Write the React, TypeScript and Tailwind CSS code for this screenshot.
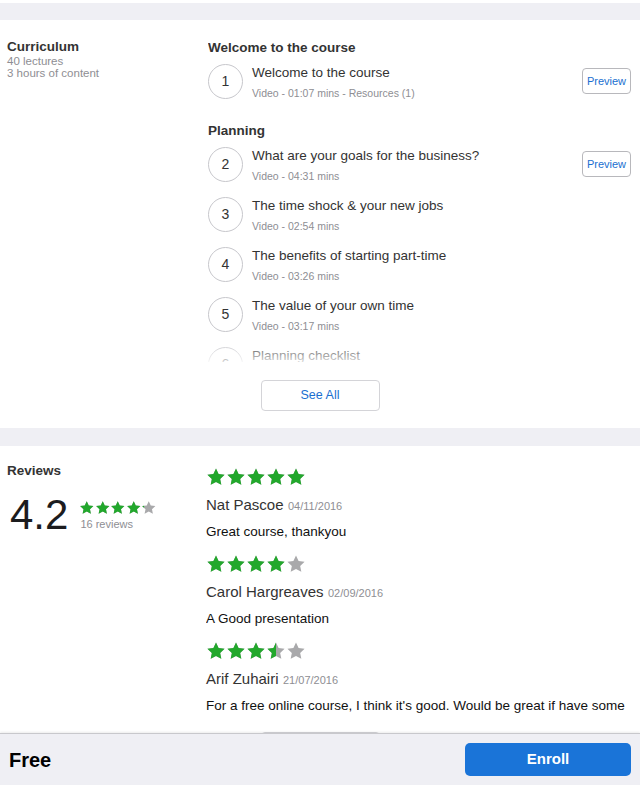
import React from "react";

type Lecture = {
  n: number;
  title: string;
  meta: string;
  preview?: boolean;
};

type Review = {
  rating: number;
  name: string;
  date: string;
  text: string;
};

const STAR = "M12 1.8l3.1 6.6 7.2.9-5.3 5 1.4 7.1L12 17.9l-6.4 3.5 1.4-7.1-5.3-5 7.2-.9z";

function Star({ size, fill }: { size: number; fill: number }) {
  const id = `clip-${size}-${Math.round(fill * 100)}`;
  return (
    <svg width={size} height={size} viewBox="0 0 24 24" className="block">
      <defs>
        <clipPath id={id}>
          <rect x="0" y="0" width={24 * fill} height="24" />
        </clipPath>
      </defs>
      <path d={STAR} fill="#a9a9ab" />
      {fill > 0 && <path d={STAR} fill="#22a82c" clipPath={`url(#${id})`} />}
    </svg>
  );
}

function Stars({ rating, size }: { rating: number; size: number }) {
  return (
    <div className="flex">
      {[0, 1, 2, 3, 4].map((i) => (
        <Star key={i} size={size} fill={Math.max(0, Math.min(1, rating - i))} />
      ))}
    </div>
  );
}

function LectureRow({ l }: { l: Lecture }) {
  return (
    <div className="h-[50px] flex items-center">
      <div className="w-[35px] h-[35px] rounded-full border border-[#c7c7cc] flex items-center justify-center text-[14px] text-[#333]">
        {l.n}
      </div>
      <div className="flex-1 self-start pt-[9px] pl-[9px]">
        <p className="text-[13.5px] leading-[16px] text-[#333]">{l.title}</p>
        <p className="mt-[5px] text-[10.5px] leading-[14px] text-[#8e8e93]">{l.meta}</p>
      </div>
      {l.preview && (
        <button className="w-[49px] h-[26px] rounded-[4px] border border-[#b8b8bc] text-[11px] text-[#1a6fd0]">
          Preview
        </button>
      )}
    </div>
  );
}

const welcome: Lecture[] = [
  { n: 1, title: "Welcome to the course", meta: "Video - 01:07 mins - Resources (1)", preview: true },
];

const planning: Lecture[] = [
  { n: 2, title: "What are your goals for the business?", meta: "Video - 04:31 mins", preview: true },
  { n: 3, title: "The time shock & your new jobs", meta: "Video - 02:54 mins" },
  { n: 4, title: "The benefits of starting part-time", meta: "Video - 03:26 mins" },
  { n: 5, title: "The value of your own time", meta: "Video - 03:17 mins" },
  { n: 6, title: "Planning checklist", meta: "Document" },
];

const reviews: Review[] = [
  { rating: 5, name: "Nat Pascoe", date: "04/11/2016", text: "Great course, thankyou" },
  { rating: 4, name: "Carol Hargreaves", date: "02/09/2016", text: "A Good presentation" },
  {
    rating: 3.5,
    name: "Arif Zuhairi",
    date: "21/07/2016",
    text: "For a free online course, I think it's good. Would be great if have some more examples",
  },
];

export default function App() {
  return (
    <div
      className="relative w-[640px] h-[785px] overflow-hidden bg-white"
      style={{ fontFamily: '"Liberation Sans", Arial, sans-serif' }}
    >
      <div className="h-[3px]" />
      <div className="h-[17px] bg-[#efeff4]" />

      {/* Curriculum */}
      <section className="h-[408px] flex flex-col">
        <div className="flex">
          <div className="w-[208px] pl-[7px] pt-[19px]">
            <p className="text-[13.5px] leading-[16px] font-bold text-[#333]">Curriculum</p>
            <p className="text-[11.5px] leading-[12px] text-[#8e8e93]">40 lectures</p>
            <p className="text-[11.5px] leading-[12px] text-[#8e8e93]">3 hours of content</p>
          </div>
          <div className="relative flex-1 pr-[9px] h-[342px] overflow-hidden">
            <p className="pt-[20px] text-[13.5px] leading-[16px] font-bold text-[#333]">Welcome to the course</p>
            {welcome.map((l) => (
              <LectureRow key={l.n} l={l} />
            ))}
            <p className="mt-[17px] text-[13.5px] leading-[16px] font-bold text-[#333]">Planning</p>
            {planning.map((l) => (
              <LectureRow key={l.n} l={l} />
            ))}
            <div className="absolute left-0 right-0 bottom-0 h-[22px] bg-gradient-to-b from-white/0 to-white/80" />
          </div>
        </div>
        <div className="flex justify-center pt-[18px]">
          <button className="w-[119px] h-[31px] rounded-[4px] border border-[#d4d4d8] text-[12.5px] text-[#1a6fd0]">
            See All
          </button>
        </div>
      </section>

      <div className="h-[18px] bg-[#efeff4]" />

      {/* Reviews */}
      <section className="flex">
        <div className="w-[206px] pl-[7px] pt-[17px]">
          <p className="text-[13.5px] leading-[16px] font-bold text-[#333]">Reviews</p>
          <div className="flex items-center mt-[13px] pl-[3px]">
            <span className="text-[42px] leading-[46px] text-[#1c1c1e]">4.2</span>
            <div className="ml-[11px]">
              <Stars rating={4.2} size={15.5} />
              <p className="mt-[2px] text-[11px] leading-[12px] text-[#8e8e93] pl-[1px]">16 reviews</p>
            </div>
          </div>
        </div>
        <div className="flex-1 pt-[21px] pr-[9px] min-w-0">
          {reviews.map((r, i) => (
            <div key={i} className={i > 0 ? "mt-[13px]" : ""}>
              <Stars rating={r.rating} size={20} />
              <p className="mt-[9px] leading-[18px] whitespace-nowrap">
                <span className="text-[15px] text-[#333]">{r.name}</span>{" "}
                <span className="text-[11px] text-[#8e8e93]">{r.date}</span>
              </p>
              <p className="mt-[8px] h-[18px] text-[13.5px] leading-[18px] text-[#111] overflow-hidden">
                {r.text}
              </p>
            </div>
          ))}
        </div>
      </section>
      <div className="flex justify-center mt-[17px]">
        <button className="w-[119px] h-[31px] rounded-[4px] border border-[#d4d4d8] text-[12.5px] text-[#1a6fd0]">
          See All
        </button>
      </div>

      {/* Bottom bar */}
      <div className="absolute left-0 right-0 bottom-0 h-[52px] bg-[#efeff4] border-t border-[#c8c8cc] shadow-[0_-1px_2px_rgba(0,0,0,0.08)] flex items-center justify-between pl-[9px] pr-[9px]">
        <span className="text-[20px] font-bold text-black">Free</span>
        <button className="w-[166px] h-[33px] rounded-[5px] bg-[#1a74d8] text-white text-[15px] font-bold">
          Enroll
        </button>
      </div>
    </div>
  );
}
